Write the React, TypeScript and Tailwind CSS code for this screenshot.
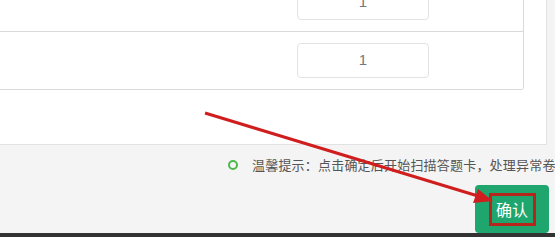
export default function App() {
  const rows = [{ value: "1" }, { value: "1" }];

  return (
    <div className="relative h-[237px] w-[555px] overflow-hidden bg-[#f4f4f4] font-['Noto_Sans_CJK_SC','Liberation_Sans',sans-serif]">
      {/* content panel */}
      <div className="h-[145px] w-[547px] overflow-hidden border-b border-r border-[#e2e2e2] bg-white">
        <div className="-mt-[26px] w-[524px] overflow-hidden rounded-br-[3px] border-r border-[#d9d9d9]">
          {rows.map((row, i) => (
            <div
              key={i}
              className="flex h-[58px] items-center border-b border-[#d9d9d9] pl-[297px]"
            >
              <div className="flex h-[35px] w-[132px] items-center justify-center rounded-[4px] border border-[#e3e3e3] font-['Liberation_Sans',sans-serif] text-[15px] text-[#777]">
                {row.value}
              </div>
            </div>
          ))}
        </div>
      </div>

      {/* footer */}
      <div className="flex h-[88px] flex-col">
        <div className="flex h-[42px] items-center whitespace-nowrap pl-[228px] text-[13px] tracking-[0.2px] text-[#555]">
          <span className="mr-[14px] h-[10px] w-[10px] shrink-0 rounded-full border-2 border-[#4cb84c]" />
          <span>温馨提示：点击确定后开始扫描答题卡，处理异常卷</span>
        </div>
        <div className="flex justify-end pr-[6px]">
          <button
            type="button"
            className="flex h-[48px] w-[74px] items-center justify-center rounded-[4px] bg-[#1fa66e] text-[16px] text-white"
          >
            <span className="flex h-[33px] w-[47px] items-center justify-center border-[3px] border-[#b8251d]">
              确认
            </span>
          </button>
        </div>
      </div>

      <div className="absolute bottom-0 left-0 h-[4px] w-full bg-[#333]" />

      {/* annotation arrow */}
      <svg
        className="pointer-events-none absolute left-0 top-0"
        width="555"
        height="237"
        viewBox="0 0 555 237"
      >
        <line x1="205" y1="113" x2="478" y2="196" stroke="#d01e1e" strokeWidth="3" />
        <polygon points="493,201 473,203 478,189" fill="#d01e1e" />
      </svg>
    </div>
  );
}
